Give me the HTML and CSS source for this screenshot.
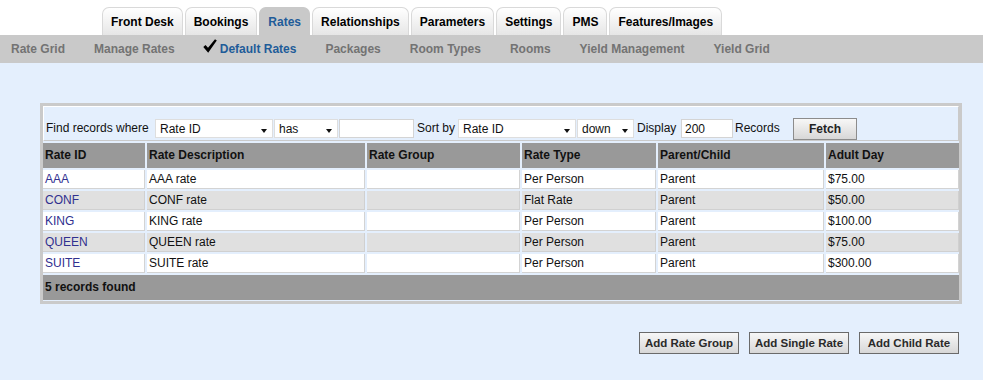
FILE: index.html
```html
<!DOCTYPE html>
<html>
<head>
<meta charset="utf-8">
<link rel="stylesheet" href="styles.css">
</head>
<body>
<div class="tabs">
  <div class="tab">Front Desk</div>
  <div class="tab">Bookings</div>
  <div class="tab active">Rates</div>
  <div class="tab">Relationships</div>
  <div class="tab">Parameters</div>
  <div class="tab">Settings</div>
  <div class="tab">PMS</div>
  <div class="tab">Features/Images</div>
</div>
<div class="subnav">
  <span class="sub">Rate Grid</span>
  <span class="sub">Manage Rates</span>
  <span class="sub current"><svg class="check" width="14" height="14" viewBox="0 0 14 14"><path d="M0.3 8 L2.5 6 L5 8.8 L12 0.2 L13.8 1.4 L5.2 13.8 Z" fill="#000"/></svg>Default Rates</span>
  <span class="sub">Packages</span>
  <span class="sub">Room Types</span>
  <span class="sub">Rooms</span>
  <span class="sub">Yield Management</span>
  <span class="sub">Yield Grid</span>
</div>
<div class="main">
  <div class="panel">
    <div class="filter">
      <span class="lbl lbl-find">Find records where</span>
      <span class="select sel-field">Rate ID<i class="arrow"></i></span>
      <span class="select sel-op">has<i class="arrow"></i></span>
      <span class="textbox tb-query"></span>
      <span class="lbl lbl-sort">Sort by</span>
      <span class="select sel-field">Rate ID<i class="arrow"></i></span>
      <span class="select sel-dir">down<i class="arrow"></i></span>
      <span class="lbl lbl-display">Display</span>
      <span class="textbox tb-count">200</span>
      <span class="lbl lbl-records">Records</span>
      <span class="btn fetch">Fetch</span>
    </div>
    <div class="grid">
      <div class="th">Rate ID</div>
      <div class="th">Rate Description</div>
      <div class="th">Rate Group</div>
      <div class="th">Rate Type</div>
      <div class="th">Parent/Child</div>
      <div class="th">Adult Day</div>

      <div class="td"><a class="rid">AAA</a></div>
      <div class="td">AAA rate</div>
      <div class="td"></div>
      <div class="td">Per Person</div>
      <div class="td">Parent</div>
      <div class="td">$75.00</div>

      <div class="td alt"><a class="rid">CONF</a></div>
      <div class="td alt">CONF rate</div>
      <div class="td alt"></div>
      <div class="td alt">Flat Rate</div>
      <div class="td alt">Parent</div>
      <div class="td alt">$50.00</div>

      <div class="td"><a class="rid">KING</a></div>
      <div class="td">KING rate</div>
      <div class="td"></div>
      <div class="td">Per Person</div>
      <div class="td">Parent</div>
      <div class="td">$100.00</div>

      <div class="td alt"><a class="rid">QUEEN</a></div>
      <div class="td alt">QUEEN rate</div>
      <div class="td alt"></div>
      <div class="td alt">Per Person</div>
      <div class="td alt">Parent</div>
      <div class="td alt">$75.00</div>

      <div class="td"><a class="rid">SUITE</a></div>
      <div class="td">SUITE rate</div>
      <div class="td"></div>
      <div class="td">Per Person</div>
      <div class="td">Parent</div>
      <div class="td">$300.00</div>

      <div class="tfoot">5 records found</div>
    </div>
  </div>
  <div class="actions">
    <span class="btn action">Add Rate Group</span>
    <span class="btn action">Add Single Rate</span>
    <span class="btn action">Add Child Rate</span>
  </div>
</div>
</body>
</html>
```

FILE: styles.css
```css
html, body {
  margin: 0;
  padding: 0;
  background: #ffffff;
  font-family: "Liberation Sans", Arial, sans-serif;
  font-size: 12px;
  color: #111;
}

.tabs {
  display: flex;
  gap: 2px;
  padding: 7px 0 0 102px;
  height: 28px;
}

.tab {
  height: 28px;
  line-height: 28px;
  padding: 0 8px;
  border: 1px solid #d9d9d9;
  border-bottom: none;
  border-radius: 7px 7px 0 0;
  background: linear-gradient(#ffffff, #e6e6e6);
  font-weight: bold;
  color: #000;
  box-sizing: border-box;
}

.tab.active {
  background: #c9c9c9;
  border-color: #c9c9c9;
  color: #1f5c99;
}

.subnav {
  display: flex;
  align-items: center;
  gap: 29px;
  height: 28px;
  padding-left: 11px;
  background: #c9c9c9;
  font-weight: bold;
  color: #737373;
}

.sub {
  display: flex;
  align-items: flex-end;
}

.sub.current {
  color: #1f5c99;
}

.check {
  margin: 0 3px 0 -1px;
  position: relative;
  top: -3px;
}

.main {
  background: #e4effd;
  height: 317px;
  padding: 40px 21px 0 40px;
  box-sizing: border-box;
}

.panel {
  width: 922px;
  box-sizing: border-box;
  border: 3px solid #cacaca;
  padding-bottom: 1px;
}

.filter {
  display: flex;
  align-items: center;
  height: 35px;
  box-sizing: border-box;
  padding: 10px 0 1px 2px;
  margin-bottom: 2px;
  border-top: 1px solid #ffffff;
  border-left: 1px solid #ffffff;
  border-right: 1px solid #cacaca;
  border-bottom: 1px solid #cacaca;
}

.lbl {
  white-space: nowrap;
  color: #111;
}

.lbl-find { width: 109px; }
.lbl-sort { width: 41px; }
.lbl-display { width: 44px; }
.lbl-records { width: 58px; }

.select, .textbox {
  height: 19px;
  line-height: 18px;
  box-sizing: border-box;
  background: #ffffff;
  border: 1px solid #dedede;
  padding-left: 4px;
  position: relative;
  color: #111;
}

.select { margin-right: 1px; }
.sel-field { width: 118px; }
.sel-op { width: 64px; }
.sel-dir { width: 57px; margin-right: 3px; }

.arrow {
  position: absolute;
  right: 5px;
  top: 9px;
  width: 0;
  height: 0;
  border-left: 3.5px solid transparent;
  border-right: 3.5px solid transparent;
  border-top: 4px solid #111;
}

.textbox {
  border-color: #d4d4d4;
  padding-left: 3px;
}

.tb-query { width: 75px; margin-right: 3px; }
.tb-count { width: 52px; margin-right: 2px; }

.btn {
  display: inline-flex;
  align-items: center;
  justify-content: center;
  box-sizing: border-box;
  background: linear-gradient(#f7f7f7, #d7d7d7);
  font-weight: bold;
  color: #222;
}

.fetch {
  width: 64px;
  height: 22px;
  border: 1px solid #8c8c8c;
  margin-top: 2px;
}

.grid {
  display: grid;
  grid-template-columns: 102px 218px 153px 134px 166px 133px;
  grid-template-rows: 25px repeat(5, 19px) 25px;
  column-gap: 2px;
  row-gap: 2px;
}

.th {
  background: #999999;
  font-weight: bold;
  color: #111;
  padding-left: 2px;
  line-height: 25px;
}

.td {
  background: #ffffff;
  box-sizing: border-box;
  border-right: 1px solid #d3d3d3;
  border-bottom: 1px solid #d3d3d3;
  padding-left: 2px;
  line-height: 18px;
  color: #111;
}

.td.alt {
  background: #e0e0e0;
  border-color: #d0d0d0;
}

.rid {
  color: #30308f;
  text-decoration: none;
}

.tfoot {
  grid-column: 1 / -1;
  background: #999999;
  font-weight: bold;
  color: #111;
  padding-left: 2px;
  line-height: 25px;
}

.actions {
  display: flex;
  justify-content: flex-end;
  gap: 10px;
  margin-top: 28px;
  padding-right: 3px;
}

.action {
  width: 100px;
  height: 22px;
  border: 1px solid #6a6a6a;
  font-size: 11.5px;
  color: #2a2a2a;
}
```
